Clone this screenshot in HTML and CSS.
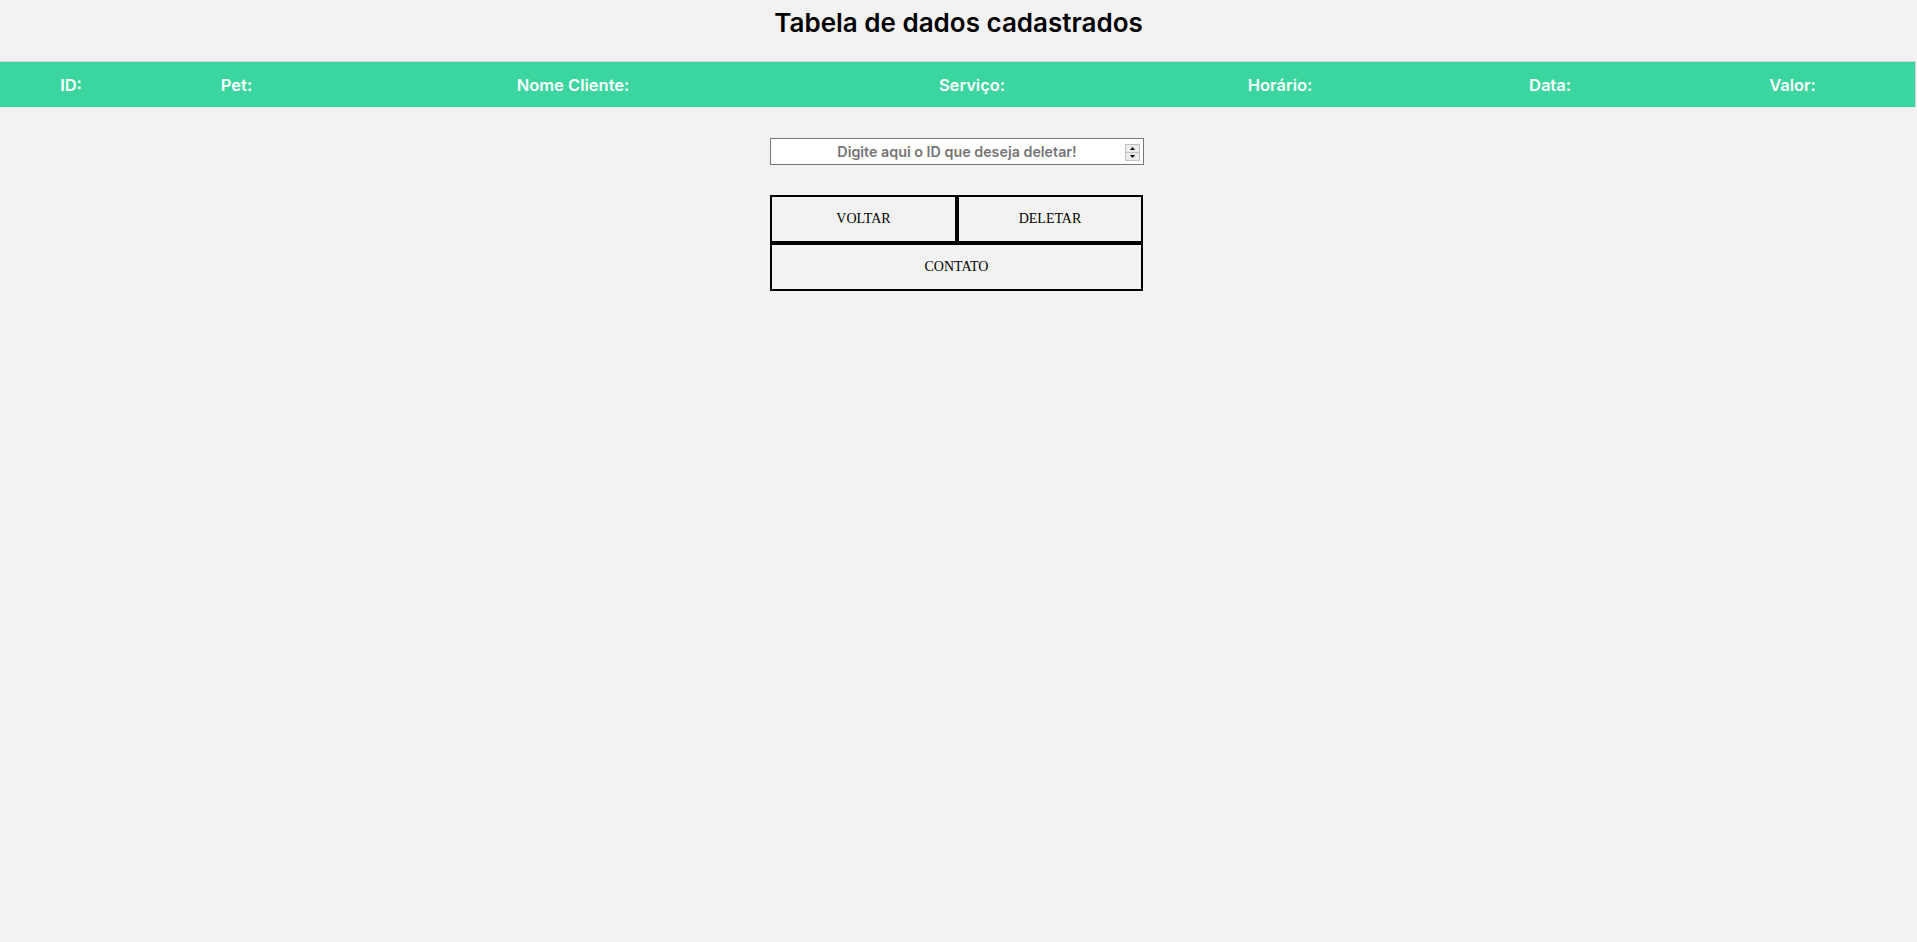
FILE: index.html
```html
<!DOCTYPE html>
<html lang="pt-BR">
<head>
<meta charset="utf-8">
<title>Tabela de dados cadastrados</title>
<link rel="stylesheet" href="styles.css">
</head>
<body>
  <h1 class="title">Tabela de dados cadastrados</h1>
  <div class="table-head">
    <div class="th">ID:</div>
    <div class="th">Pet:</div>
    <div class="th">Nome Cliente:</div>
    <div class="th">Serviço:</div>
    <div class="th">Horário:</div>
    <div class="th">Data:</div>
    <div class="th">Valor:</div>
  </div>
  <div class="form">
    <div class="input-wrap">
      <input class="id-input" type="number" placeholder="Digite aqui o ID que deseja deletar!">
      <svg class="spin" width="15" height="17" viewBox="0 0 15 17" aria-hidden="true">
        <rect x="0.5" y="0.5" width="14" height="8" fill="#ececec" stroke="#c4c4c4"/>
        <rect x="0.5" y="8.5" width="14" height="8" fill="#ececec" stroke="#c4c4c4"/>
        <path d="M5 6 L10 6 L7.5 3 Z" fill="#000"/>
        <path d="M5 11 L10 11 L7.5 14 Z" fill="#000"/>
      </svg>
    </div>
    <div class="buttons">
      <button class="btn">VOLTAR</button>
      <button class="btn">DELETAR</button>
      <button class="btn btn-wide">CONTATO</button>
    </div>
  </div>
</body>
</html>
```

FILE: styles.css
```css
html, body {
  margin: 0;
  padding: 0;
}

body {
  background: #f2f2f2;
  font-family: "Inter", "Open Sans", sans-serif;
  color: #000;
}

.title {
  margin: 0;
  padding: 7px 0 23px;
  font-size: 26px;
  line-height: 31px;
  font-weight: 600;
  text-align: center;
  color: #000;
}

.table-head {
  display: grid;
  grid-template-columns: 142px 189px 484px 314px 302px 238px 247px;
  height: 46px;
  width: 1916px;
  box-sizing: border-box;
  background: #3bd5a0;
  border-top: 1px solid #d6d6d6;
  border-right: 1px solid #d6d6d6;
}

.th {
  display: flex;
  align-items: center;
  justify-content: center;
  color: #fff;
  font-size: 16.5px;
  font-weight: 600;
}

.form {
  width: 374px;
  margin: 31px 0 0 calc(50% - 188.5px);
  display: flex;
  flex-direction: column;
  gap: 30px;
}

.input-wrap {
  position: relative;
  height: 27px;
}

.id-input {
  box-sizing: border-box;
  width: 374px;
  height: 27px;
  margin: 0;
  padding: 1px 2px;
  border: 1px solid #767676;
  background: #fff;
  text-align: center;
  font-family: "Inter", "Open Sans", sans-serif;
  font-size: 14.3px;
  font-weight: 600;
  color: #000;
  outline: none;
  -moz-appearance: textfield;
}

.id-input::placeholder {
  color: #757575;
}

.id-input::-webkit-inner-spin-button,
.id-input::-webkit-outer-spin-button {
  -webkit-appearance: none;
  margin: 0;
}

.spin {
  position: absolute;
  top: 6px;
  right: 4px;
  display: block;
}

.buttons {
  display: grid;
  grid-template-columns: 187px 186px;
}

.btn {
  box-sizing: border-box;
  height: 48px;
  margin: 0;
  border: 2px solid #000;
  background: #f2f2f2;
  font-family: "Liberation Serif", "Times New Roman", serif;
  font-size: 14px;
  color: #000;
  padding: 0;
}

.btn-wide {
  grid-column: 1 / 3;
}
```
